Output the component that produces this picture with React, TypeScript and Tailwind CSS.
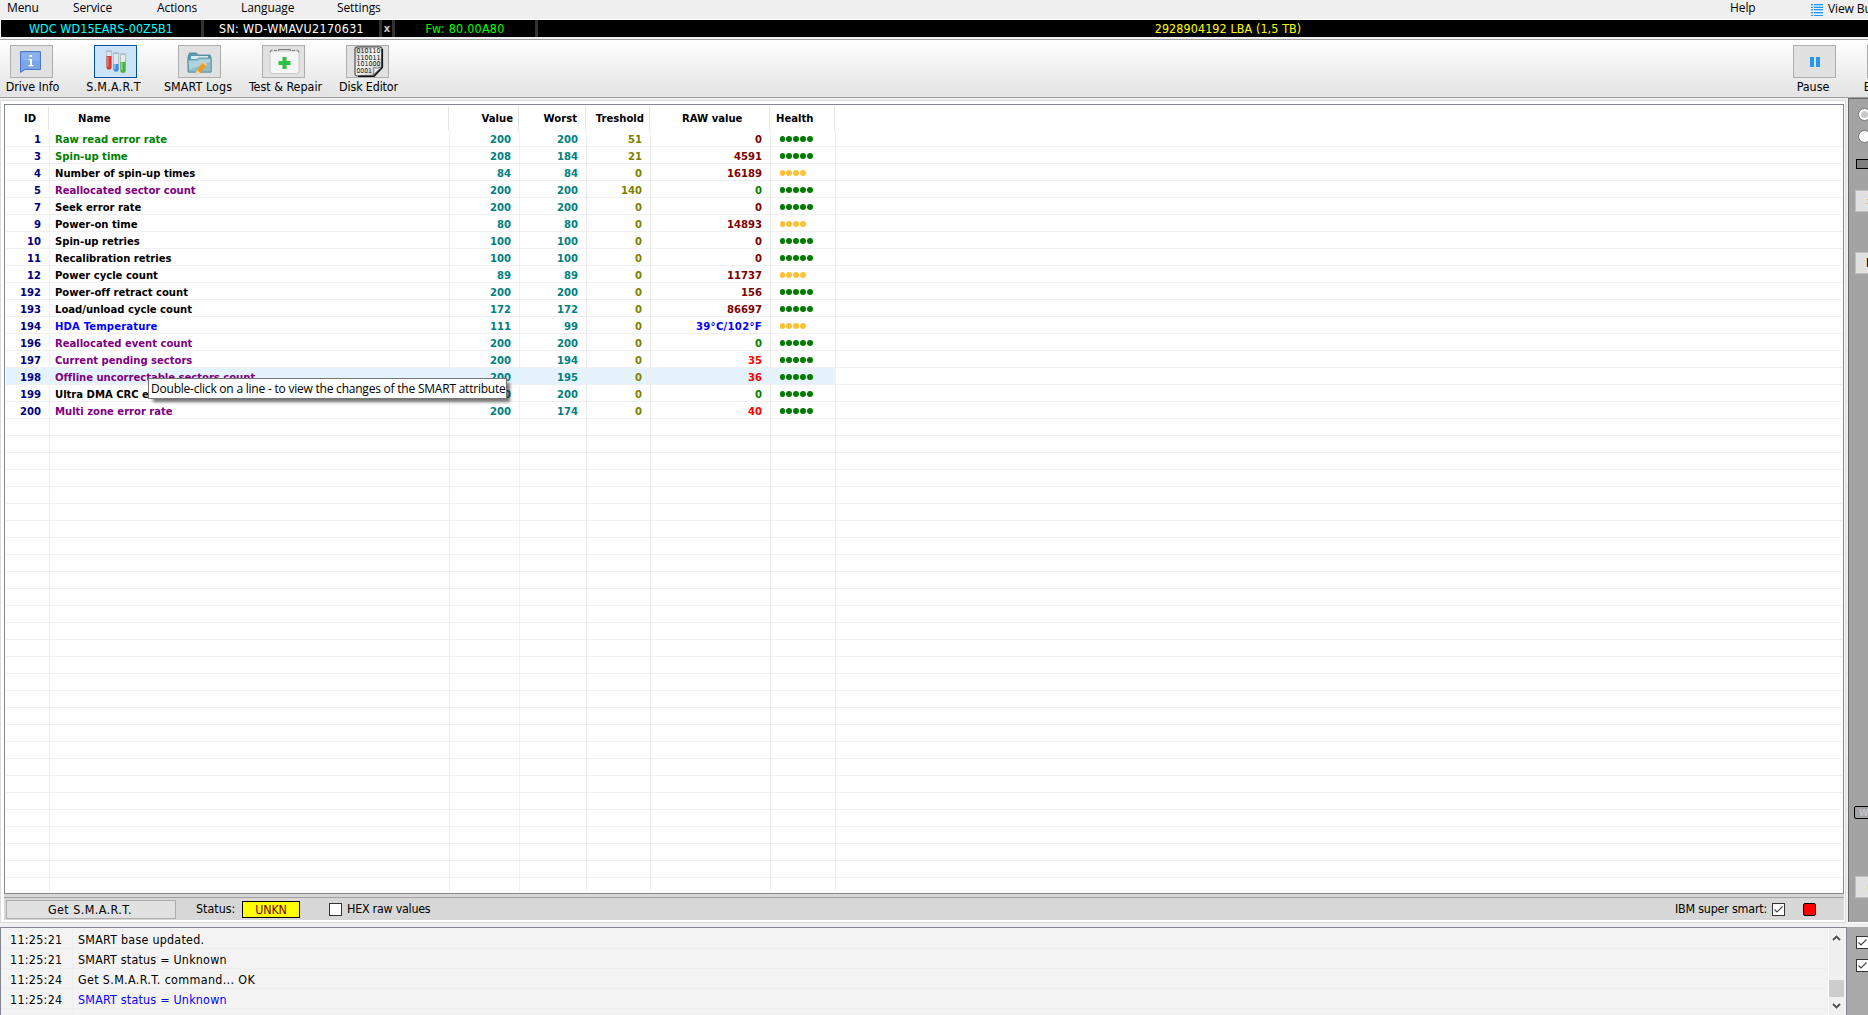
import React from 'react';

type Tone = 'good' | 'plain' | 'alert' | 'temp';
type RawTone = 'maroon' | 'green' | 'red' | 'blue';

interface Attribute {
  id: number;
  name: string;
  tone: Tone;
  value: number;
  worst: number;
  threshold: number;
  raw: string;
  rawTone: RawTone;
  health: number;
}

const UI_FONT = "font-['DejaVu_Sans_Condensed','DejaVu_Sans',sans-serif] [font-stretch:condensed]";
const MENU_FONT = "font-['Open_Sans','Noto_Sans',sans-serif] [font-stretch:normal]";

const ATTRIBUTES: Attribute[] = [
  { id: 1, name: 'Raw read error rate', tone: 'good', value: 200, worst: 200, threshold: 51, raw: '0', rawTone: 'maroon', health: 5 },
  { id: 3, name: 'Spin-up time', tone: 'good', value: 208, worst: 184, threshold: 21, raw: '4591', rawTone: 'maroon', health: 5 },
  { id: 4, name: 'Number of spin-up times', tone: 'plain', value: 84, worst: 84, threshold: 0, raw: '16189', rawTone: 'maroon', health: 4 },
  { id: 5, name: 'Reallocated sector count', tone: 'alert', value: 200, worst: 200, threshold: 140, raw: '0', rawTone: 'green', health: 5 },
  { id: 7, name: 'Seek error rate', tone: 'plain', value: 200, worst: 200, threshold: 0, raw: '0', rawTone: 'maroon', health: 5 },
  { id: 9, name: 'Power-on time', tone: 'plain', value: 80, worst: 80, threshold: 0, raw: '14893', rawTone: 'maroon', health: 4 },
  { id: 10, name: 'Spin-up retries', tone: 'plain', value: 100, worst: 100, threshold: 0, raw: '0', rawTone: 'maroon', health: 5 },
  { id: 11, name: 'Recalibration retries', tone: 'plain', value: 100, worst: 100, threshold: 0, raw: '0', rawTone: 'maroon', health: 5 },
  { id: 12, name: 'Power cycle count', tone: 'plain', value: 89, worst: 89, threshold: 0, raw: '11737', rawTone: 'maroon', health: 4 },
  { id: 192, name: 'Power-off retract count', tone: 'plain', value: 200, worst: 200, threshold: 0, raw: '156', rawTone: 'maroon', health: 5 },
  { id: 193, name: 'Load/unload cycle count', tone: 'plain', value: 172, worst: 172, threshold: 0, raw: '86697', rawTone: 'maroon', health: 5 },
  { id: 194, name: 'HDA Temperature', tone: 'temp', value: 111, worst: 99, threshold: 0, raw: '39°C/102°F', rawTone: 'blue', health: 4 },
  { id: 196, name: 'Reallocated event count', tone: 'alert', value: 200, worst: 200, threshold: 0, raw: '0', rawTone: 'green', health: 5 },
  { id: 197, name: 'Current pending sectors', tone: 'alert', value: 200, worst: 194, threshold: 0, raw: '35', rawTone: 'red', health: 5 },
  { id: 198, name: 'Offline uncorrectable sectors count', tone: 'alert', value: 200, worst: 195, threshold: 0, raw: '36', rawTone: 'red', health: 5 },
  { id: 199, name: 'Ultra DMA CRC errors', tone: 'plain', value: 200, worst: 200, threshold: 0, raw: '0', rawTone: 'green', health: 5 },
  { id: 200, name: 'Multi zone error rate', tone: 'alert', value: 200, worst: 174, threshold: 0, raw: '40', rawTone: 'red', health: 5 },
];

const SELECTED_ID = 198;
const EMPTY_ROWS = 27;

const LOG = [
  { time: '11:25:21', text: 'SMART base updated.', style: 'text-black tracking-[0.25px]' },
  { time: '11:25:21', text: 'SMART status = Unknown', style: 'text-black tracking-[0.22px]' },
  { time: '11:25:24', text: 'Get S.M.A.R.T. command... OK', style: 'text-black tracking-[0.35px]' },
  { time: '11:25:24', text: 'SMART status = Unknown', style: 'text-[#0000ff] tracking-[0.22px]' },
];

const toneColor: Record<Tone, string> = {
  good: 'text-[#008000]',
  plain: 'text-black tracking-[-0.02px]',
  alert: 'text-[#800080] tracking-[-0.03px]',
  temp: 'text-[#0000ff] tracking-[0.15px]',
};

const rawColor: Record<RawTone, string> = {
  maroon: 'text-[#800000]',
  green: 'text-[#008000]',
  red: 'text-[#ff0000]',
  blue: 'text-[#0000ff] tracking-[0.3px]',
};

const InfoIcon = () => (
  <svg width="22" height="22" viewBox="0 0 22 22" className="mr-px">
    <path d="M.5.500h20v18H5L.5 21.500z" fill="#7aa5e6" stroke="#4a78c4" />
    <path d="M1.500 1.500h18v8h-18z" fill="#8ab1ee" />
    <path d="M9.500 4h2.500v2H9.500zM8.500 8h3.500v6h1.500v1.200h-5V14H10V9.200H8.500z" fill="#fff" />
  </svg>
);

const TubesIcon = () => (
  <svg width="22" height="26" viewBox="0 0 22 26" className="mt-[1px]">
    <rect x="1.500" y="2" width="5" height="18.500" rx="2.500" fill="#dfe6ee" stroke="#aab4c4" strokeWidth=".8" />
    <path d="M1.500 7h5v11a2.500 2.500 0 0 1-5 0z" fill="#d93a2e" />
    <path d="M2.300 8h1.200v10H2.300z" fill="#f08a80" />
    <rect x="8.500" y="4" width="5" height="18.500" rx="2.500" fill="#dfe9f4" stroke="#a4b2c6" strokeWidth=".8" />
    <path d="M8.500 15h5v5a2.500 2.500 0 0 1-5 0z" fill="#3b8fe0" />
    <path d="M9.300 15h1.200v5H9.300z" fill="#9fd0ff" />
    <rect x="15.500" y="5" width="5" height="19" rx="2.500" fill="#e2efe6" stroke="#a4b6b0" strokeWidth=".8" />
    <path d="M15.500 13h5v8.500a2.500 2.500 0 0 1-5 0z" fill="#45b53c" />
    <path d="M16.300 13.500h1.200V21h-1.200z" fill="#a5e69c" />
    <path d="M.8 2h6.400M7.800 4h6.400M14.800 5h6.400" stroke="#a8acb8" />
  </svg>
);

const FolderIcon = () => (
  <svg width="25" height="24" viewBox="0 0 25 24" className="mt-[3px]">
    <path d="M1 5.500 2.500 2h7L11 4h12l1 2v15H1z" fill="#5c98ac" stroke="#4a8297" strokeWidth=".8" />
    <path d="M4 5h17v4H4z" fill="#d8ecf2" />
    <path d="M.8 8.500h9l2-1.500h12.400v14H1.500z" fill="#8dbccb" stroke="#5490a5" strokeWidth=".8" />
    <path d="M2 10h8.500l2-1.500h10.500v2.500L2 19z" fill="#aed3de" />
    <path d="m10 19 5.500-7 3.500 3-5.500 7-5 1.500z" fill="#f39a1d" />
    <path d="m15.500 12 1.300-1.600 3.500 3L19 15z" fill="#f7c98a" />
    <path d="m9.800 19 3.500 3-4.800 1.500z" fill="#f2dfbf" />
  </svg>
);

const RepairIcon = () => (
  <svg width="31" height="27" viewBox="0 0 31 27" className="ml-px">
    <rect x="1" y="3" width="29" height="22.500" rx="2.500" fill="#f5f5f5" stroke="#c9c9c9" />
    <path d="M3 23.500h25" stroke="#fff" />
    <path d="M1 4.500q0-2.500 2.500-2.500M30 4.500q0-2.500-2.500-2.500M5 2.500h3M23 2.500h3M9.500 3V1.500h12V3" stroke="#7d7d7d" fill="none" />
    <path d="M13.500 9h4v4h4v4h-4v4h-4v-4h-4v-4h4z" fill="#2fc044" />
  </svg>
);

const EditorIcon = () => (
  <svg width="30" height="31" viewBox="0 0 30 31" className="ml-[3px]">
    <defs>
      <linearGradient id="sheet" x1="0" y1="0" x2="1" y2="1">
        <stop offset="0" stopColor="#d0d0d0" />
        <stop offset=".5" stopColor="#f4f4f4" />
        <stop offset="1" stopColor="#b8b8b8" />
      </linearGradient>
    </defs>
    <path d="M3.500.8h22q2.500 0 2.500 2.500v18l-8 8.700H3.500Q1 30 1 27.500v-24Q1 .8 3.500.8z" fill="url(#sheet)" stroke="#555" strokeWidth="1.200" />
    <path d="M28.300 3v18.500l-8.300 8.700H4" fill="none" stroke="#111" strokeWidth="1.600" />
    <g className="font-['DejaVu_Sans_Condensed',sans-serif]" fontSize="6.600" fill="#111">
      <text x="2.500" y="7" textLength="24" lengthAdjust="spacingAndGlyphs">010110</text>
      <text x="2.500" y="13.500" textLength="24" lengthAdjust="spacingAndGlyphs">110011</text>
      <text x="2.500" y="20" textLength="24" lengthAdjust="spacingAndGlyphs">101000</text>
      <text x="2.500" y="26.500" textLength="15.500" lengthAdjust="spacingAndGlyphs">0001</text>
    </g>
    <path d="M18.500 29.500q2.500-3 1-8 3.500 1.700 8-.5z" fill="#f8f8f8" stroke="#555" strokeWidth=".7" />
  </svg>
);

const PauseIcon = () => (
  <svg width="10" height="10" viewBox="0 0 10 10" className="mt-[1px]">
    <path d="M0 0h4v10H0zM6 0h4v10H6z" fill="#2196f3" />
  </svg>
);

const ListIcon = () => (
  <svg width="12" height="12" viewBox="0 0 12 12" shapeRendering="crispEdges">
    <path d="M0 1h12v2H0zM0 6h12v1H0zM0 9h12v1H0z" fill="#a6d4fa" />
    <path d="M0 0h12v1H0zM0 3h12v1H0zM0 5h12v1H0zM0 8h12v1H0zM0 11h12v1H0z" fill="#2196f3" />
    <path d="M2 0h1v12H2z" fill="#dcecf8" />
  </svg>
);

interface ToolButtonProps {
  label: string;
  labelClass?: string;
  active?: boolean;
  children?: React.ReactNode;
}

const ToolButton: React.FC<ToolButtonProps> = ({ label, labelClass = '', active = false, children }) => (
  <div className="flex w-[43px] shrink-0 flex-col items-center">
    <button
      className={`flex h-[33px] w-[43px] shrink-0 items-center justify-center border ${
        active ? 'border-[#005499] bg-[#cce4f7]' : 'border-[#adadad] bg-[#e1e1e1]'
      }`}
    >
      {children}
    </button>
    <span className={`mt-px h-4 whitespace-nowrap text-[12.400px] leading-4 ${labelClass}`}>{label}</span>
  </div>
);

const Checkbox = ({ checked = false }: { checked?: boolean }) => (
  <span className="flex h-[13px] w-[13px] shrink-0 items-center justify-center border border-[#333] bg-white">
    {checked && (
      <svg width="11" height="11" viewBox="0 0 11 11">
        <path d="M1.500 5.500 4 8l5.500-5.500" fill="none" stroke="#444" strokeWidth="1.200" />
      </svg>
    )}
  </span>
);

const MenuBar = () => (
  <div className={`flex h-5 shrink-0 items-start border-b border-white bg-[#f0f0f0] pl-[7px] text-[12px] leading-4 tracking-[-0.1px] ${MENU_FONT}`}>
    <span className="w-[66px]">Menu</span>
    <span className="w-[84px]">Service</span>
    <span className="w-[84px]">Actions</span>
    <span className="w-[96px]">Language</span>
    <span>Settings</span>
    <span className="ml-auto w-[81px]">Help</span>
    <span className="flex w-[57px] gap-[5px] overflow-hidden whitespace-nowrap pt-px">
      <span className="shrink-0 pt-[3px]"><ListIcon /></span>
      <span>View Bu</span>
    </span>
  </div>
);

const DriveBar = () => (
  <div className="ml-px flex h-[17px] shrink-0 overflow-hidden bg-black text-center text-[12.400px] leading-[17px]">
    <span className="w-[200px] shrink-0 tracking-[0.12px] text-[#00ffff]">WDC WD15EARS-00Z5B1</span>
    <span className="w-[181px] shrink-0 border-x-[3px] border-[#333] tracking-[0.33px] text-white">SN: WD-WMAVU2170631</span>
    <span className="w-[10px] shrink-0 text-[11px] font-bold leading-[17px] text-[#c8c8c8]">x</span>
    <span className="w-[146px] shrink-0 border-x-[3px] border-[#333] tracking-[0.28px] text-[#00ff00]">Fw: 80.00A80</span>
    <span className="w-[1380px] shrink-0 tracking-[0.12px] text-[#ffff00]">2928904192 LBA (1,5 TB)</span>
  </div>
);

const Toolbar = () => (
  <div className="mt-0.5 flex h-[59px] shrink-0 overflow-hidden border-y border-[#a0a0a0] bg-gradient-to-b from-white to-[#e3e3e3] pl-[10px] pt-[5px]">
    <div className="flex gap-[41px]">
      <ToolButton label="Drive Info" labelClass="ml-[2px] tracking-[-0.1px]"><InfoIcon /></ToolButton>
      <ToolButton label="S.M.A.R.T" labelClass="mr-[4px] tracking-[0.25px]" active><TubesIcon /></ToolButton>
      <ToolButton label="SMART Logs" labelClass="mr-[3px] tracking-[0.1px]"><FolderIcon /></ToolButton>
      <ToolButton label="Test &amp; Repair" labelClass="ml-[4px]"><RepairIcon /></ToolButton>
      <ToolButton label="Disk Editor" labelClass="ml-[2px] tracking-[-0.15px]"><EditorIcon /></ToolButton>
    </div>
    <div className="ml-auto flex w-[75px] shrink-0 gap-[31px]">
      <ToolButton label="Pause" labelClass="mr-[3px]"><PauseIcon /></ToolButton>
      <ToolButton label="Break All" />
    </div>
  </div>
);

const CELL = 'border-r border-[#f0f0f0]';
const COLS = 'grid grid-cols-[44px_400px_70px_67px_64px_120px_65px_1fr]';
const HEAD_CELL = 'border-r border-[#e5e5e5]';

const Health = ({ count }: { count: number }) => (
  <div className="flex h-full items-center gap-[1.800px] pl-[8.500px] pt-[2px]">
    {Array.from({ length: count }, (_, i) => (
      <span key={i} className={`h-[5.200px] w-[5.200px] rounded-full ${count === 5 ? 'bg-[#007a00]' : 'bg-[#ffc033]'}`} />
    ))}
  </div>
);

const AttributeRow = ({ attr }: { attr: Attribute }) => {
  const bg = attr.id === SELECTED_ID ? 'bg-[#e5f3ff]' : '';
  return (
    <div className={`h-[17px] border-b border-[#f0f0f0] text-right leading-[19px] ${COLS}`}>
      <div className={`${CELL} ${bg} h-4 pr-2 text-[#000080]`}>{attr.id}</div>
      <div className={`${CELL} ${bg} h-4 whitespace-nowrap pl-[5px] text-left ${toneColor[attr.tone]}`}>{attr.name}</div>
      <div className={`${CELL} ${bg} h-4 pr-2 text-[#008080]`}>{attr.value}</div>
      <div className={`${CELL} ${bg} h-4 pr-2 text-[#008080]`}>{attr.worst}</div>
      <div className={`${CELL} ${bg} h-4 pr-2 text-[#808000]`}>{attr.threshold}</div>
      <div className={`${CELL} ${bg} h-4 pr-2 ${rawColor[attr.rawTone]}`}>{attr.raw}</div>
      <div className={`${CELL} ${bg} h-4`}><Health count={attr.health} /></div>
    </div>
  );
};

const EmptyRow = () => (
  <div className={`h-[17px] border-b border-[#f0f0f0] ${COLS}`}>
    {Array.from({ length: 7 }, (_, i) => <div key={i} className={CELL} />)}
  </div>
);

const AttributeTable = () => (
  <div className="relative ml-[3px] mr-px h-[790px] shrink-0 border border-[#828790] bg-white px-px pt-px text-[11.200px] font-bold">
    <div className="grid h-6 grid-cols-[43px_400px_70px_67px_64px_120px_65px] leading-[26px]">
      <div className={`${HEAD_CELL} h-6 pl-[18px]`}>ID</div>
      <div className={`${HEAD_CELL} h-6 pl-[29px]`}>Name</div>
      <div className={`${HEAD_CELL} h-6 pr-[5px] text-right`}>Value</div>
      <div className={`${HEAD_CELL} h-6 pr-[8px] text-right`}>Worst</div>
      <div className={`${HEAD_CELL} h-6 pr-[5px] text-right`}>Treshold</div>
      <div className={`${HEAD_CELL} h-6 pl-[32px]`}>RAW value</div>
      <div className={`${HEAD_CELL} h-6 pl-[6px]`}>Health</div>
    </div>
    {ATTRIBUTES.map(attr => <AttributeRow key={attr.id} attr={attr} />)}
    {Array.from({ length: EMPTY_ROWS }, (_, i) => <EmptyRow key={i} />)}
    <div className={`h-[14px] ${COLS}`}>
      {Array.from({ length: 7 }, (_, i) => <div key={i} className={CELL} />)}
    </div>
    <div className={`absolute left-[143px] top-[273px] h-[21px] w-[359px] whitespace-nowrap border border-[#767676] bg-white pl-[2px] text-[12px] font-normal leading-[19px] tracking-[-0.22px] shadow-[4px_4px_3px_-1px_rgba(0,0,0,0.55)] ${MENU_FONT}`}>
      Double-click on a line - to view the changes of the SMART attribute
    </div>
  </div>
);

const StatusBar = () => (
  <div className="ml-[3px] mr-px flex h-[26px] shrink-0 flex-col bg-[#d7d7d7] pt-[3px]">
    <div className="flex h-[23px] items-center border-t border-[#a0a0a0] pl-[2px] text-[12.400px]">
      <button className="h-[19px] w-[170px] border border-[#adadad] bg-[#e1e1e1] leading-[18px]">
        <span className="mr-[2px] tracking-[0.45px]">Get S.M.A.R.T.</span>
      </button>
      <span className="ml-[20px] w-[46px] pt-px">Status:</span>
      <span className="h-[17px] w-[58px] border border-black bg-[#ffff00] text-center leading-[16px] tracking-[-0.2px] text-[#800000]">UNKN</span>
      <span className="ml-[29px] mr-[5px]"><Checkbox /></span>
      <span className="pt-px tracking-[-0.25px]">HEX raw values</span>
      <span className="ml-auto mr-[5px] pt-px tracking-[-0.2px]">IBM super smart:</span>
      <Checkbox checked />
      <span className="ml-[18px] mr-[28px] h-[13px] w-[13px] rounded-[2px] border border-black bg-[#ff0000]" />
    </div>
  </div>
);

const SidePanel = () => (
  <div className="flex w-5 shrink-0 flex-col overflow-hidden border-l border-t border-[#696969] bg-[#a3a3a3] pl-[6px]">
    <span className="ml-[3px] mt-[9px] flex h-[13px] w-[13px] shrink-0 items-center justify-center rounded-full border border-[#777] bg-white">
      <span className="h-[7px] w-[7px] rounded-full bg-[#c8c8c8]" />
    </span>
    <span className="ml-[3px] mt-[9px] h-[13px] w-[13px] shrink-0 rounded-full border border-[#777] bg-white" />
    <span className="ml-px mt-[16px] h-[10px] w-10 shrink-0 border border-black bg-[#808080]" />
    <button className="mt-[21px] h-[22px] w-20 shrink-0 border border-[#bfbfbf] bg-[#e1e1e1] pl-[10px] text-left text-[11px] leading-5 text-[#e0b060]">:</button>
    <button className="mt-[40px] h-[22px] w-20 shrink-0 border border-[#bfbfbf] bg-[#e1e1e1] pl-[10px] text-left text-[12px] font-bold leading-5 text-[#400000]">R</button>
    <span className="mt-[532px] h-[13px] w-20 shrink-0 -translate-x-px rounded-[2px] border border-black pl-1 text-[9.500px] font-bold leading-[11px] text-[#c4c4c4]">WRITE</span>
    <button className="mt-[57px] h-[22px] w-20 shrink-0 border border-[#bfbfbf] bg-[#e1e1e1] pl-[11px]">
      <span className="block h-[10px] w-3 rounded-full bg-[#e3e36a]" />
    </button>
  </div>
);

const Scrollbar = () => (
  <div className="mr-[2px] flex w-4 shrink-0 flex-col items-center border-l border-white bg-[#f0f0f0]">
    <svg width="9" height="6" viewBox="0 0 9 6" className="mt-[6px] shrink-0">
      <path d="M1 5 4.500 1.500 8 5" fill="none" stroke="#505050" strokeWidth="1.800" />
    </svg>
    <div className="mt-[39px] h-[17px] w-full shrink-0 bg-[#cdcdcd]" />
    <svg width="9" height="6" viewBox="0 0 9 6" className="mt-[6px] shrink-0">
      <path d="M1 1l3.500 3.500L8 1" fill="none" stroke="#505050" strokeWidth="1.800" />
    </svg>
  </div>
);

const LogPanel = () => (
  <div className="flex h-[88px] shrink-0">
    <div className="flex w-[1847px] shrink-0 border-l border-r border-t border-[#828790] bg-[#f3f3f3] pt-px">
      <div className="flex-1 pl-px text-[12.400px]">
        {LOG.map((entry, i) => (
          <div key={i} className="flex h-5 border-b border-[#eeeeee] leading-[22px]">
            <span className="w-[71px] border-r border-[#eeeeee] pl-2 tracking-[0.3px]">{entry.time}</span>
            <span className={`pl-[5px] ${entry.style}`}>{entry.text}</span>
          </div>
        ))}
        <div className="h-[5px] w-[71px] border-r border-[#eeeeee]" />
      </div>
      <Scrollbar />
    </div>
    <div className="flex flex-1 flex-col gap-[10px] overflow-hidden bg-[#a9a9a9] pl-[9px] pt-[9px]">
      <Checkbox checked />
      <Checkbox checked />
    </div>
  </div>
);

const App = () => (
  <div className={`flex h-[1015px] w-[1868px] flex-col overflow-hidden bg-[#f0f0f0] text-black ${UI_FONT}`}>
    <MenuBar />
    <DriveBar />
    <Toolbar />
    <div className="flex h-[829px] shrink-0">
      <div className="mr-[2px] mt-[2px] flex h-[823px] w-[1846px] shrink-0 flex-col border border-[#dcdcdc] bg-white pt-[3px]">
        <AttributeTable />
        <StatusBar />
      </div>
      <div className="flex h-[825px] border-b border-white">
        <SidePanel />
      </div>
    </div>
    <LogPanel />
  </div>
);

export default App;
